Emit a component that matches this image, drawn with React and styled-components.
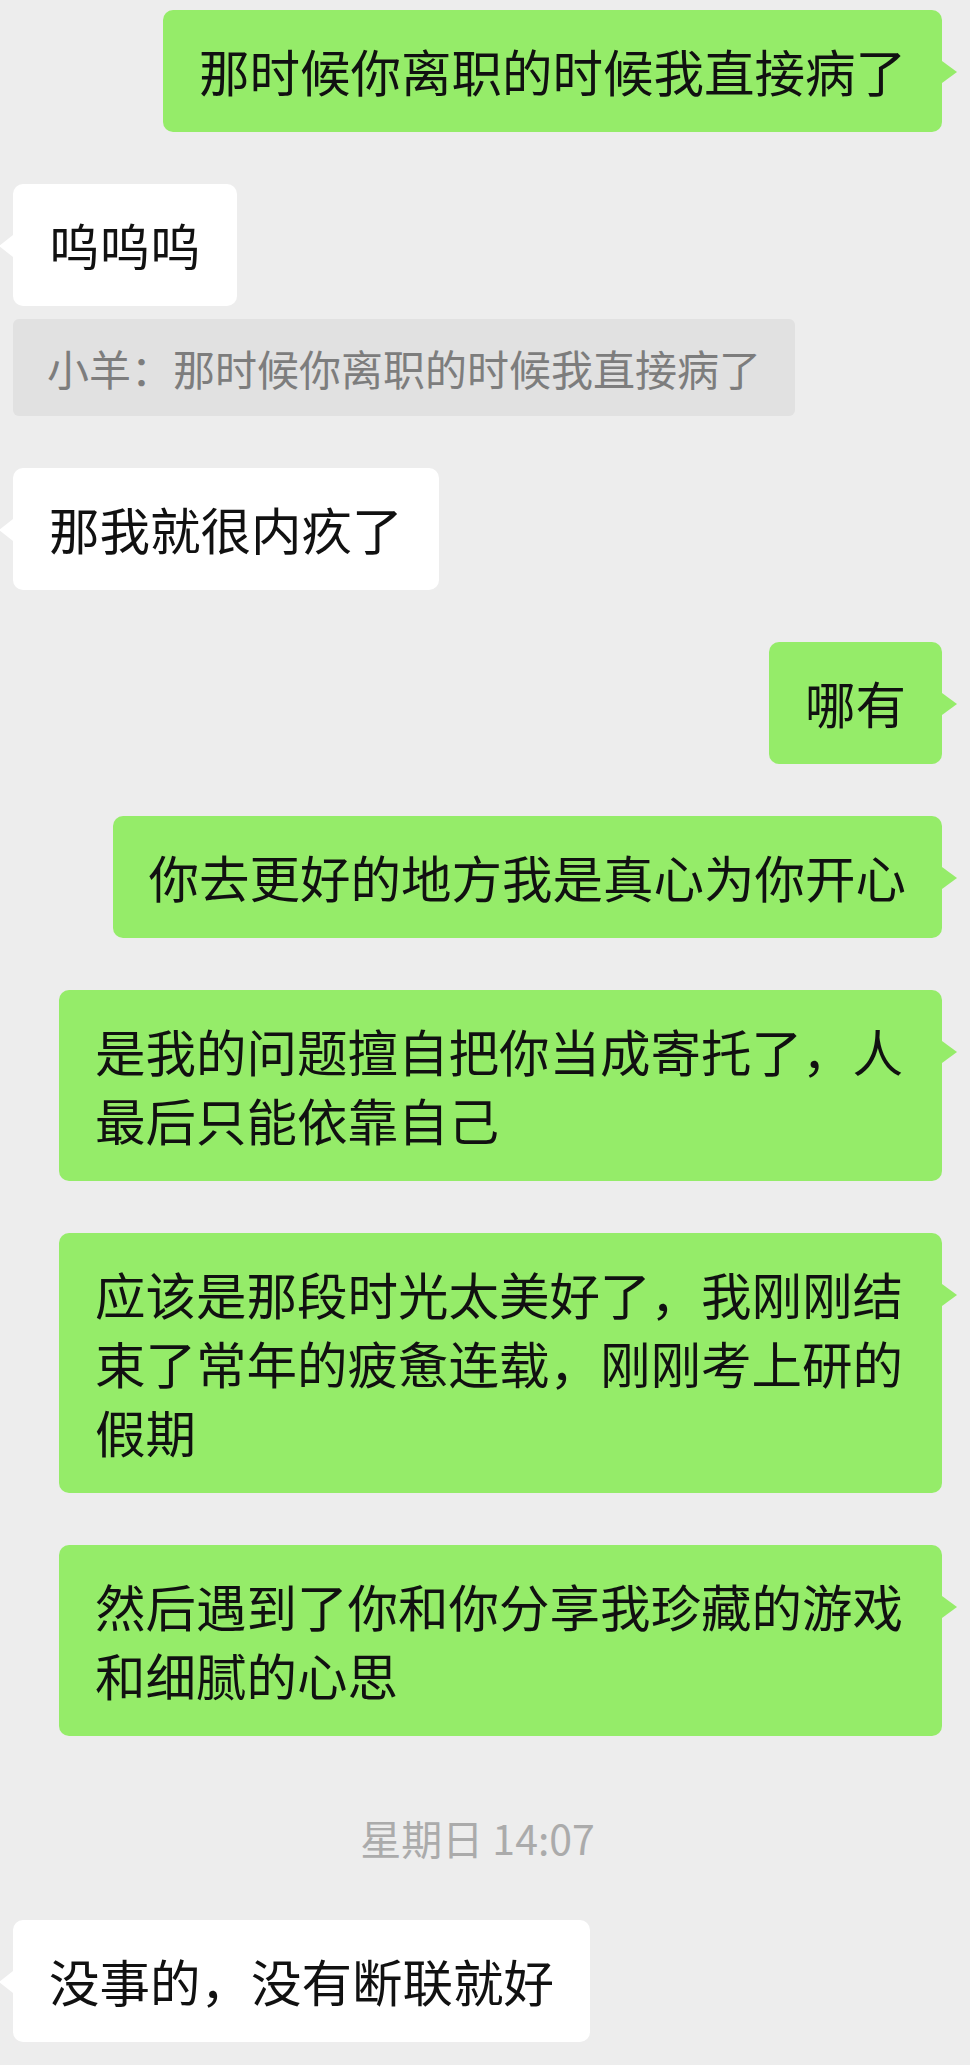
import React from "react";
import styled, { createGlobalStyle, css } from "styled-components";

const GlobalStyle = createGlobalStyle`
  html, body {
    margin: 0;
    padding: 0;
    background: #ededed;
  }
  body {
    font-family: "Noto Sans CJK SC", "Noto Sans", sans-serif;
  }
`;

const Page = styled.div`
  box-sizing: border-box;
  min-height: 2065px;
  padding: 10px 28px 21px 13px;
  display: flex;
  flex-direction: column;
  gap: 52px;
`;

const Row = styled.div`
  display: flex;
  justify-content: ${(p) => (p.$mine ? "flex-end" : "flex-start")};
`;

const Group = styled.div`
  display: flex;
  flex-direction: column;
  align-items: flex-start;
  gap: 13px;
  max-width: 100%;
`;

const Bubble = styled.div`
  position: relative;
  box-sizing: border-box;
  max-width: 883px;
  padding: 26px 36px 27px;
  font-size: 50.5px;
  line-height: 69px;
  color: #111;
  border-radius: 10px;
  background: ${(p) => (p.$mine ? "#95ec69" : "#ffffff")};

  &::after {
    content: "";
    position: absolute;
    top: 51px;
    width: 0;
    height: 0;
    border-top: 11px solid transparent;
    border-bottom: 11px solid transparent;
    ${(p) =>
      p.$mine
        ? css`
            right: -15px;
            border-left: 15px solid #95ec69;
          `
        : css`
            left: -14px;
            border-right: 14px solid #ffffff;
          `}
  }
`;

const Quote = styled.div`
  box-sizing: border-box;
  padding: 23px 34px;
  font-size: 42px;
  line-height: 51px;
  color: #7d7d7d;
  background: #e1e1e1;
  border-radius: 6px;
`;

const TimeLabel = styled.div`
  text-align: center;
  padding: 24px 0 6px;
  font-size: 41px;
  line-height: 50px;
  color: #ababab;
`;

const messages = [
  { mine: true, text: "那时候你离职的时候我直接病了" },
  { mine: false, text: "呜呜呜", quote: "小羊：那时候你离职的时候我直接病了" },
  { mine: false, text: "那我就很内疚了" },
  { mine: true, text: "哪有" },
  { mine: true, text: "你去更好的地方我是真心为你开心" },
  { mine: true, text: "是我的问题擅自把你当成寄托了，人最后只能依靠自己" },
  { mine: true, text: "应该是那段时光太美好了，我刚刚结束了常年的疲惫连载，刚刚考上研的假期" },
  { mine: true, text: "然后遇到了你和你分享我珍藏的游戏和细腻的心思" },
  { time: "星期日 14:07" },
  { mine: false, text: "没事的，没有断联就好" },
];

export default function App() {
  return (
    <>
      <GlobalStyle />
      <Page>
        {messages.map((m, i) =>
          m.time ? (
            <TimeLabel key={i}>{m.time}</TimeLabel>
          ) : (
            <Row key={i} $mine={m.mine}>
              <Group>
                <Bubble $mine={m.mine}>{m.text}</Bubble>
                {m.quote && <Quote>{m.quote}</Quote>}
              </Group>
            </Row>
          )
        )}
      </Page>
    </>
  );
}
